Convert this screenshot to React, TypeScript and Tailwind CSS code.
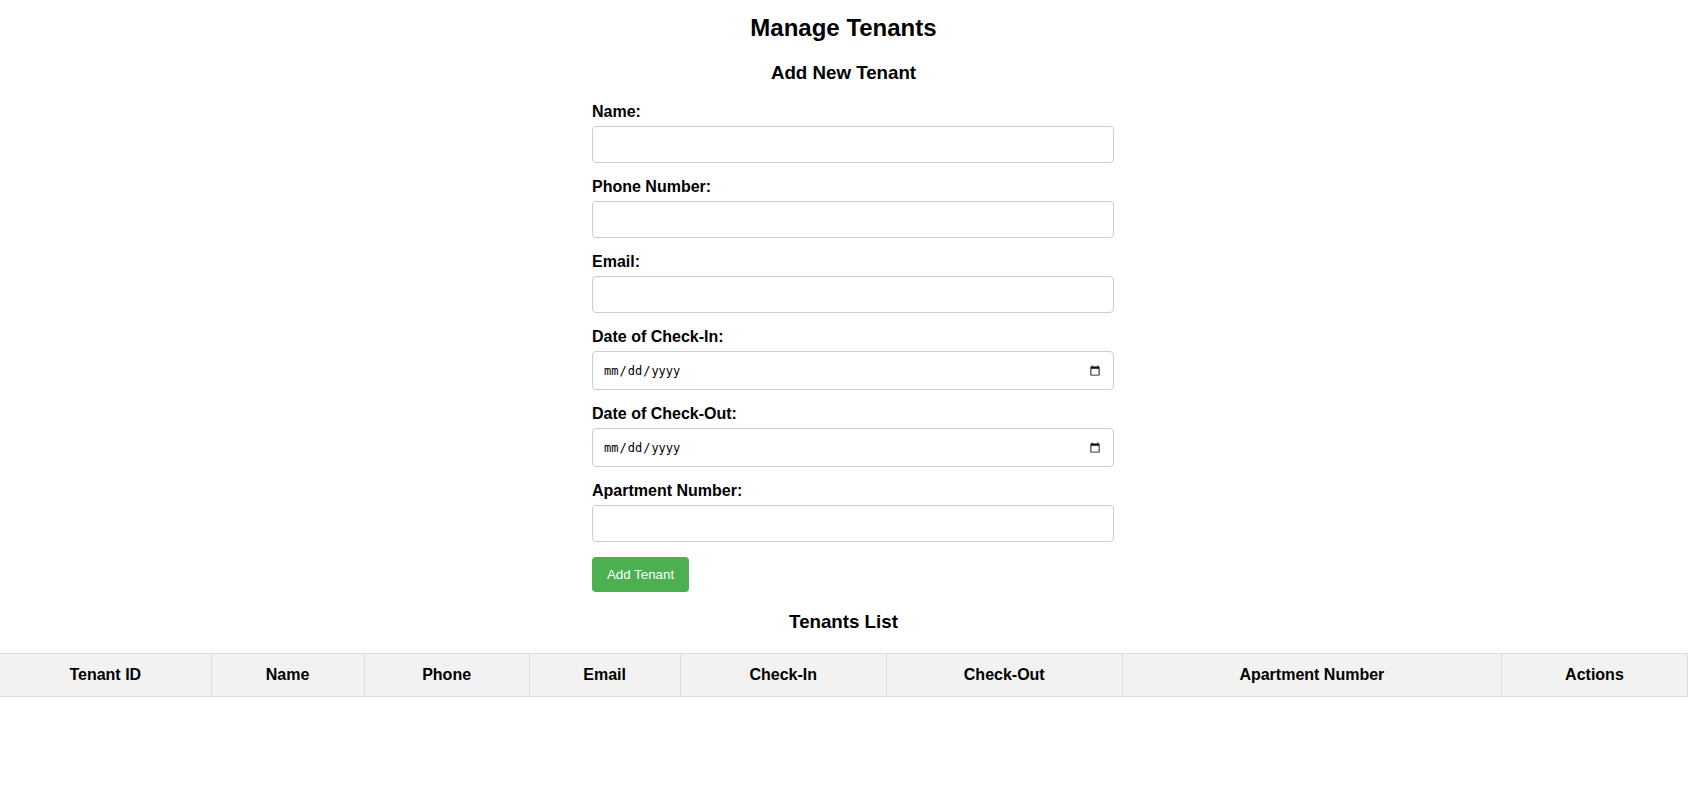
import React from "react";

const fields: { label: string; type: string }[] = [
  { label: "Name:", type: "text" },
  { label: "Phone Number:", type: "text" },
  { label: "Email:", type: "email" },
  { label: "Date of Check-In:", type: "date" },
  { label: "Date of Check-Out:", type: "date" },
  { label: "Apartment Number:", type: "text" },
];

const columns: { title: string; width: number }[] = [
  { title: "Tenant ID", width: 211 },
  { title: "Name", width: 153 },
  { title: "Phone", width: 165 },
  { title: "Email", width: 151 },
  { title: "Check-In", width: 206 },
  { title: "Check-Out", width: 236 },
  { title: "Apartment Number", width: 379 },
  { title: "Actions", width: 186 },
];

export default function App() {
  return (
    <div className="w-full min-h-[798px] bg-white">
      <div className="w-[1687px] text-black font-['Liberation_Sans',Arial,sans-serif]">
        <h2 className="mt-[14px] h-[28px] leading-[28px] text-center text-[24px] font-bold">
          Manage Tenants
        </h2>
        <h3 className="mt-[20px] h-[22px] leading-[22px] text-center text-[18.72px] font-bold">
          Add New Tenant
        </h3>
        <form
          className="mx-auto mt-[19px] w-[503px] flex flex-col"
          onSubmit={(e) => e.preventDefault()}
        >
          {fields.map((f) => (
            <div key={f.label} className="flex flex-col">
              <label className="mb-[5px] h-[18px] leading-[18px] text-[16px] font-bold">
                {f.label}
              </label>
              {f.type === "date" ? (
                <input
                  type="date"
                  className="mb-[15px] h-[39px] w-[522px] rounded-[4px] border border-[#ccc] px-[10px] text-[12px] font-['DejaVu_Sans_Mono',monospace] text-black outline-none"
                />
              ) : (
                <input
                  type={f.type}
                  className="mb-[15px] h-[37px] w-[522px] rounded-[4px] border border-[#ccc] px-[10px] text-[13.33px] outline-none"
                />
              )}
            </div>
          ))}
          <div>
            <button
              type="submit"
              className="h-[35px] w-[97px] rounded-[4px] bg-[#4CAF50] text-center text-[13.33px] leading-[35px] text-white"
            >
              Add Tenant
            </button>
          </div>
        </form>
        <h3 className="mt-[19px] h-[22px] leading-[22px] text-center text-[18.72px] font-bold">
          Tenants List
        </h3>
        <table className="mt-[20px] w-[1688px] table-fixed border-collapse">
          <colgroup>
            {columns.map((c) => (
              <col key={c.title} style={{ width: c.width }} />
            ))}
          </colgroup>
          <thead>
            <tr>
              {columns.map((c, i) => (
                <th
                  key={c.title}
                  className={
                    "h-[43px] border border-[#ddd] bg-[#f2f2f2] p-0 text-center text-[16px] font-bold leading-[18px] " +
                    (i === 0 ? "border-l-0" : "")
                  }
                >
                  {c.title}
                </th>
              ))}
            </tr>
          </thead>
          <tbody />
        </table>
      </div>
    </div>
  );
}
